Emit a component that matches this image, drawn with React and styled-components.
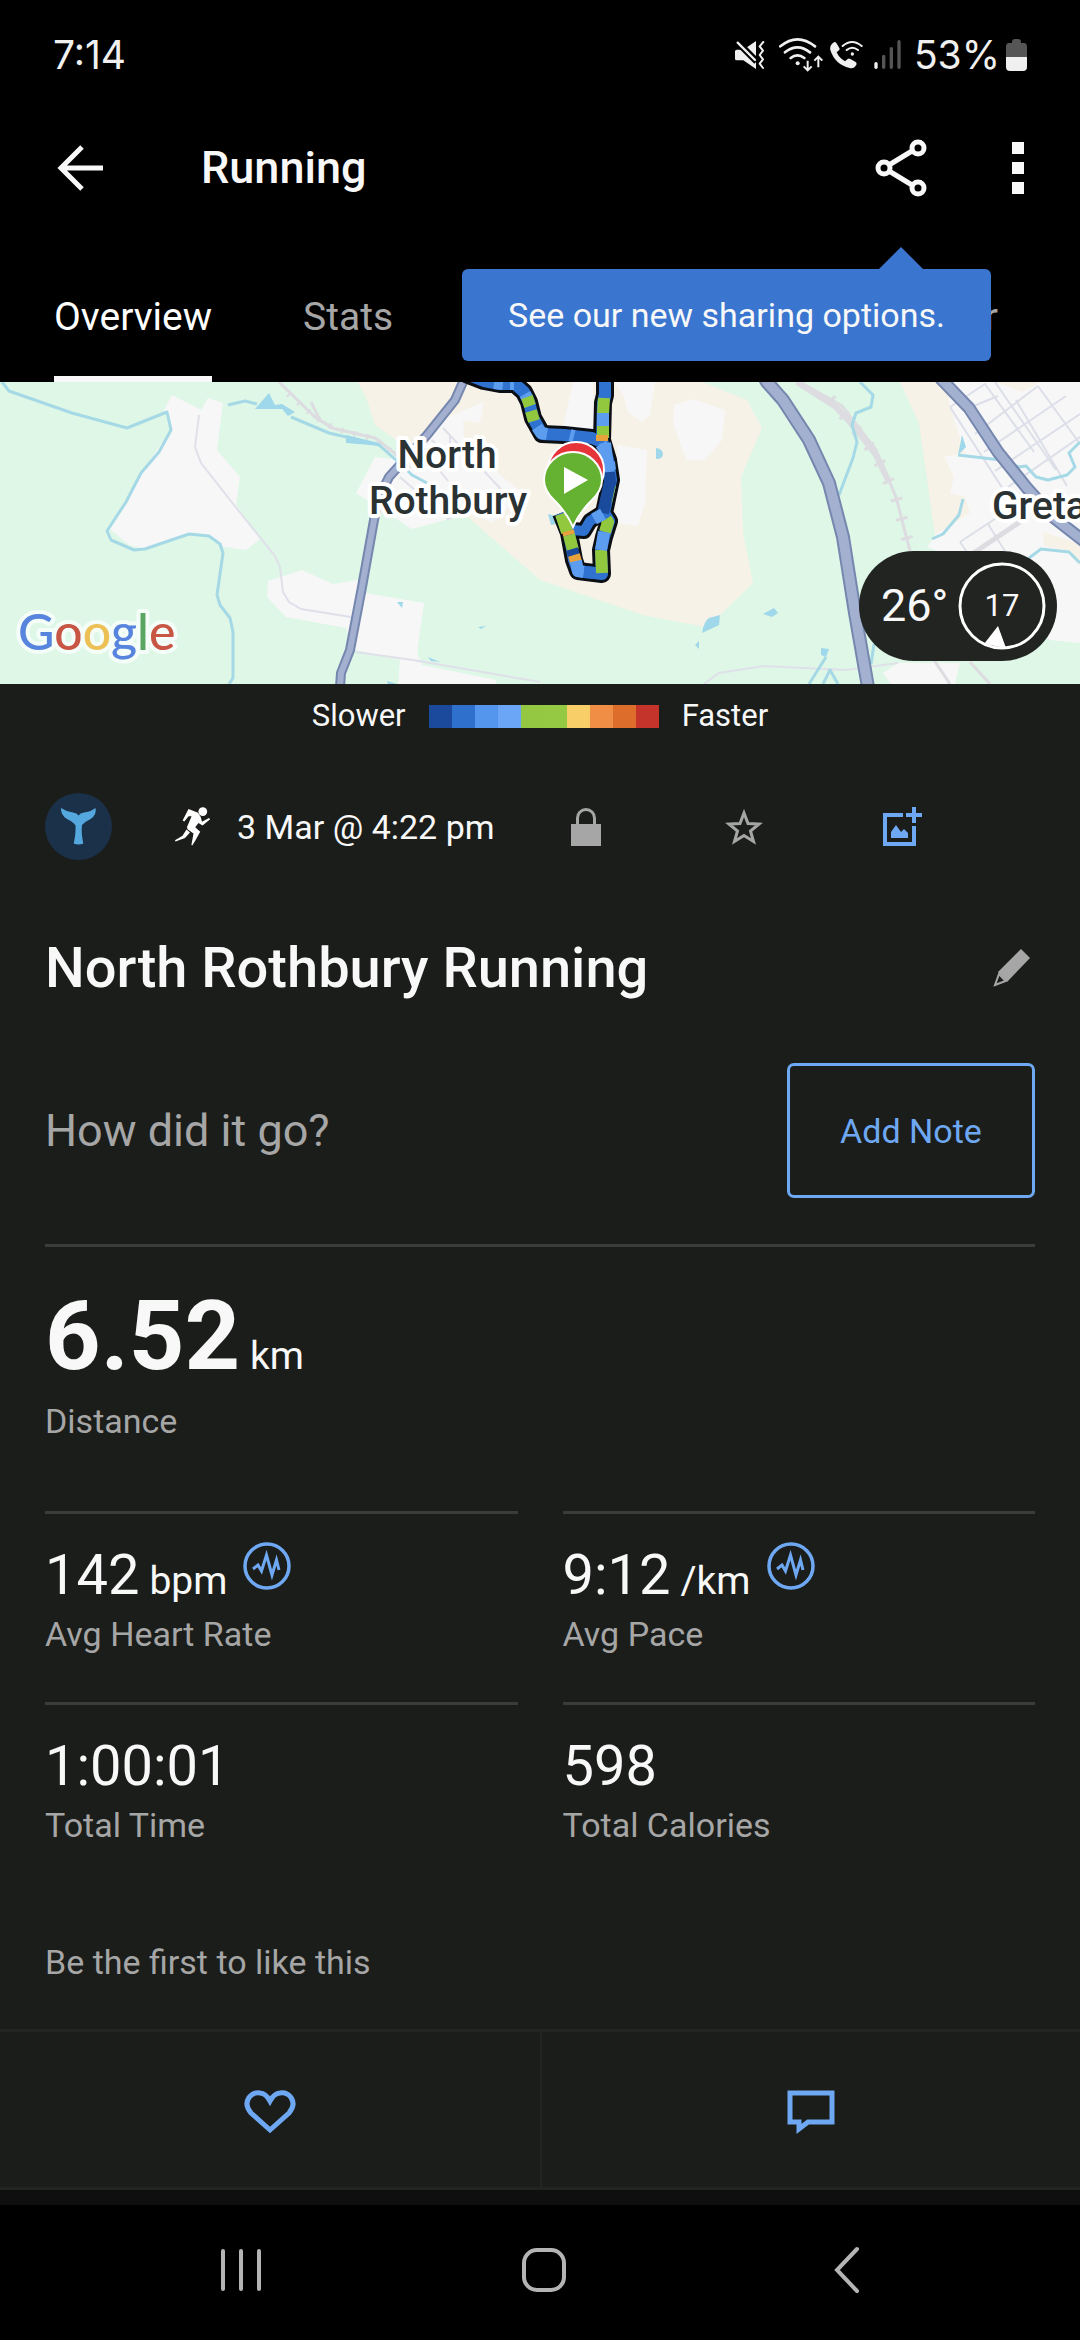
import styled, { createGlobalStyle } from "styled-components";

const colors = {
  background: "#1b1d1a",
  surface: "#222422",
  text: "#f8f8f8",
  muted: "#a6a6a6",
  accent: "#6fa8f2",
  divider: "#3b3b3a",
  tooltip: "#3a76d0",
};

const GlobalStyle = createGlobalStyle`
  * {
    box-sizing: border-box;
  }
  body {
    margin: 0;
    background-color: #000;
    color: ${colors.text};
    font-family: Roboto, "Liberation Sans", sans-serif;
  }
  button {
    padding: 0;
    border: 0;
    background: none;
    color: inherit;
    font: inherit;
    cursor: pointer;
  }
  svg {
    display: block;
  }
  h1, h2, p, dl, dd {
    margin: 0;
    font-weight: 400;
  }
`;

const Screen = styled.div`
  display: flex;
  flex-direction: column;
  min-height: 100vh;
`;

const StatusBar = styled.div`
  display: flex;
  align-items: center;
  justify-content: space-between;
  height: 110px;
  padding: 0 53px;
  font-family: Inter, Roboto, sans-serif;
  font-size: 39px;
  line-height: 46px;
  color: #f0f0f0;
`;
const StatusIcons = styled.div`
  display: flex;
  align-items: center;
  gap: 6px;
`;
const BatteryLevel = styled.span`
  margin-left: 4px;
`;

const AppBar = styled.header`
  display: flex;
  align-items: center;
  height: 116px;
  padding: 0 42px 0 44px;
`;
const IconButton = styled.button`
  display: flex;
  align-items: center;
  justify-content: center;
  width: ${(props) => props.$width || 72}px;
  height: 64px;
`;
const AppTitle = styled.h1`
  flex: 1;
  margin-left: 85px;
  font-size: 45px;
  font-weight: 500;
  line-height: 54px;
`;
const ShareWrap = styled.div`
  position: relative;
  margin-right: 61px;
`;
const Tooltip = styled.div`
  position: absolute;
  top: 133px;
  right: -54px;
  z-index: 2;
  padding: 26px 46px;
  border-radius: 6px;
  background-color: ${colors.tooltip};
  font-size: 34px;
  line-height: 40px;
  white-space: nowrap;
  &::before {
    content: "";
    position: absolute;
    bottom: 100%;
    right: 68px;
    border: 22px solid transparent;
    border-top-width: 0;
    border-bottom-color: ${colors.tooltip};
  }
`;

const Tabs = styled.nav`
  display: flex;
  gap: 91px;
  padding: 0 82px 0 54px;
`;
const Tab = styled.button`
  padding: 68px 0 36px;
  border-bottom: 6px solid ${(props) => (props.$active ? colors.text : "transparent")};
  color: ${(props) => (props.$active ? "#fff" : colors.muted)};
  font-size: 39px;
  line-height: 46px;
  &:last-child {
    margin-left: auto;
  }
`;

const MapPanel = styled.div`
  position: relative;
  height: 302px;
  background-color: #dff7e7;
  > svg {
    width: 100%;
    height: 100%;
  }
`;
const Weather = styled.div`
  position: absolute;
  right: 23px;
  bottom: 23px;
  display: flex;
  align-items: center;
  justify-content: space-between;
  width: 198px;
  height: 110px;
  padding: 0 10px 0 22px;
  border-radius: 55px;
  background-color: ${colors.surface};
  font-size: 45px;
  line-height: 54px;
`;
const Wind = styled.div`
  position: relative;
  display: flex;
  align-items: center;
  justify-content: center;
  width: 90px;
  height: 90px;
  font-size: 31px;
  line-height: 36px;
  svg {
    position: absolute;
    inset: 0;
  }
`;

const Content = styled.main`
  flex: 1;
  background-color: ${colors.background};
`;
const Legend = styled.div`
  display: flex;
  align-items: center;
  justify-content: center;
  gap: 23px;
  height: 64px;
  font-size: 31px;
  line-height: 36px;
`;
const Scale = styled.div`
  display: flex;
`;
const Swatch = styled.span`
  width: 23px;
  height: 23px;
  background-color: ${(props) => props.$color};
`;

const Section = styled.section`
  padding: 0 45px;
`;
const MetaRow = styled.div`
  display: flex;
  align-items: center;
  margin-top: 45px;
`;
const MetaDate = styled.div`
  display: flex;
  flex: 1;
  align-items: center;
  gap: 26px;
  margin-left: 63px;
  font-size: 34px;
  line-height: 40px;
`;
const MetaActions = styled.div`
  display: flex;
  margin-right: 54px;
`;
const TitleRow = styled.div`
  display: flex;
  align-items: center;
  justify-content: space-between;
  height: 66px;
  margin-top: 75px;
`;
const ActivityName = styled.h2`
  font-size: 56px;
  font-weight: 500;
  line-height: 66px;
`;
const NoteRow = styled.div`
  display: flex;
  align-items: center;
  justify-content: space-between;
  margin-top: 62px;
  padding-bottom: 46px;
  border-bottom: 3px solid ${colors.divider};
`;
const Prompt = styled.p`
  color: ${colors.muted};
  font-size: 45px;
  line-height: 54px;
`;
const NoteButton = styled.button`
  width: 248px;
  height: 135px;
  border: 3px solid ${colors.accent};
  border-radius: 7px;
  color: ${colors.accent};
  font-size: 34px;
  line-height: 40px;
`;

const Primary = styled.dl`
  display: flex;
  flex-direction: column-reverse;
  gap: 9px;
  padding: 33px 0 70px;
`;
const Label = styled.dt`
  color: ${colors.muted};
  font-size: 34px;
  line-height: 40px;
`;
const PrimaryValue = styled.dd`
  display: flex;
  align-items: baseline;
  gap: 10px;
  font-size: 97px;
  font-weight: 700;
  line-height: 112px;
`;
const Unit = styled.span`
  font-size: 39px;
  font-weight: 400;
  line-height: 46px;
`;
const StatGrid = styled.div`
  display: grid;
  grid-template-columns: 1fr 1fr;
  column-gap: 45px;
`;
const StatCell = styled.dl`
  display: flex;
  flex-direction: column-reverse;
  gap: 6px;
  padding: 28px 0 48px;
  border-top: 3px solid ${colors.divider};
`;
const Value = styled.dd`
  display: flex;
  align-items: baseline;
  gap: 10px;
  height: 66px;
  font-size: 56px;
  line-height: 66px;
`;
const ZoneButton = styled.button`
  align-self: flex-start;
  margin-left: 6px;
`;
const Likes = styled.p`
  padding: 49px 0 47px;
  color: ${colors.muted};
  font-size: 34px;
  line-height: 40px;
`;

const SocialBar = styled.div`
  display: grid;
  grid-template-columns: 1fr 1fr;
  border: solid ${colors.surface};
  border-width: 3px 0;
`;
const SocialButton = styled.button`
  display: flex;
  align-items: center;
  justify-content: center;
  height: 155px;
  padding-top: 5px;
  & + & {
    border-left: 2px solid ${colors.surface};
  }
`;
const NextCard = styled.div`
  height: 15px;
  background-color: #0f0f0f;
`;
const SystemNav = styled.nav`
  display: grid;
  grid-template-columns: repeat(3, 1fr);
  height: 135px;
  padding: 0 82px 5px 90px;
  background-color: #000;
`;
const NavButton = styled.button`
  display: flex;
  align-items: center;
  justify-content: center;
`;

/* ---- icons ---- */

const MuteIcon = () => (
  <svg width="36" height="36" viewBox="105 111 108 108" fill="#f0f0f0">
    <path d="M116 149h20l38-26v84l-38-26h-20q-5 0-5-5v-22q0-5 5-5z" />
    <path d="M116 124l60 60" stroke="#000" strokeWidth="20" />
    <path d="M119 128l52 52" stroke="#f0f0f0" strokeWidth="7" strokeLinecap="round" />
    <path
      d="M196 126l-11 13 10 13-10 13 10 13-10 13 10 13"
      fill="none"
      stroke="#f0f0f0"
      strokeWidth="6"
      strokeLinecap="round"
      strokeLinejoin="round"
    />
  </svg>
);

const WifiIcon = () => (
  <svg width="49" height="36" viewBox="231 111 147 108" fill="none" stroke="#f0f0f0" strokeWidth="8" strokeLinecap="round">
    <path d="M247 139q51-42 104 0M261 157q37-30 75 0M278 174q20-16 41 0" />
    <circle cx="299" cy="190" r="6" fill="#f0f0f0" stroke="none" />
    <path d="M329 182v27M317 199l12 12 12-12M361 202v-30M349 182l12-12 12 12" strokeWidth="6" strokeLinecap="butt" />
  </svg>
);

const WifiCallIcon = () => (
  <svg width="34" height="36" viewBox="396 111 102 108" fill="none" stroke="#f0f0f0" strokeWidth="6" strokeLinecap="round">
    <path
      d="M408 127q4-3 7 2l9 15q2 4-1 7l-7 6q7 17 25 27l8-7q4-3 8 0l16 9q4 3 2 8-7 13-20 10-44-10-58-54-3-14 11-23z"
      fill="#f0f0f0"
      stroke="none"
    />
    <path d="M434 138q28-24 57 0M446 150q17-14 34 0" />
    <circle cx="463" cy="162" r="5" fill="#f0f0f0" stroke="none" />
  </svg>
);

const SignalIcon = () => (
  <svg width="34" height="36" viewBox="516 111 102 108" strokeWidth="10" strokeLinecap="round">
    <path d="M534 191v11" stroke="#f0f0f0" />
    <path d="M557 169v33M580 146v56M603 125v77" stroke="#555" />
  </svg>
);

const BatteryIcon = () => (
  <svg width="21" height="32" viewBox="0 0 21 32">
    <path d="M6 3q0-3 3-3h3q3 0 3 3v1h3q3 0 3 4v10H0V8q0-4 3-4h3z" fill="#555" />
    <path d="M0 18h21v10q0 4-4 4H4q-4 0-4-4z" fill="#f0f0f0" />
  </svg>
);

const BackArrow = () => (
  <svg width="46" height="46" viewBox="0 0 46 46" fill="none" stroke="#f8f8f8" strokeWidth="5">
    <path d="M25 2L4 23l21 21M4 23h42" />
  </svg>
);

const ShareIcon = () => (
  <svg width="52" height="58" viewBox="0 0 52 58" fill="none" stroke="#f8f8f8" strokeWidth="5">
    <circle cx="43" cy="9" r="6" />
    <circle cx="9" cy="29" r="6" />
    <circle cx="43" cy="49" r="6" />
    <path d="M14 26l23-14M14 32l23 14" />
  </svg>
);

const MoreIcon = () => (
  <svg width="12" height="52" viewBox="0 0 12 52" fill="#f8f8f8">
    <path d="M0 0h12v12H0zM0 20h12v12H0zM0 40h12v12H0z" />
  </svg>
);

const AvatarIcon = () => (
  <svg width="67" height="67" viewBox="0 0 67 67">
    <circle cx="33.500" cy="33.500" r="33.500" fill="#1b3049" />
    <path
      d="M16 15q6 4 12 4.500 4 .5 5.500 3 1.500-2.500 5.500-3 6-.5 11.500-4.500 1.500 7-5 11-6 3-8.500 6-1 8 1.300 18.500-4.800 2-9.600 0Q31 40 30.500 32.500q-2-3.500-8.500-6.500-6.500-4-6-11z"
      fill="#55a8dd"
    />
  </svg>
);

const RunnerIcon = () => (
  <svg width="36" height="39" viewBox="0 0 36 39" fill="#fff">
    <circle cx="27.800" cy="4.600" r="4.400" />
    <path d="M13.500 2L23 5.800l2.600 4 1.400 5L34 11l1.200 1.200-7.700 6.300-4-2.500-3.300 4.300 5 4.500-5 9-3 4.700-.8-.5 2.100-11.500-6-4.200-.5-2.300 4.600-10.700-3 0L9.300 14.500 7.600 13.500z" />
    <path d="M11.500 22.500l3.500 3-5 5.500-9.500 3.500L0 33.300l7.500-4.600z" />
  </svg>
);

const LockIcon = () => (
  <svg width="30" height="39" viewBox="0 0 30 39">
    <path d="M6.500 18V11a8.500 8.500 0 0117 0v7" fill="none" stroke={colors.muted} strokeWidth="3" />
    <path d="M0 17h30v22H0z" fill={colors.muted} />
  </svg>
);

const StarIcon = () => (
  <svg width="38" height="36" viewBox="0 0 38 36" fill="none" stroke={colors.muted} strokeWidth="3">
    <path d="M19 4l4 10.500 11 .5-8.500 7 3 10.500L19 26.500 9.500 32.500l3-10.500L4 15l11-.5z" />
  </svg>
);

const AddPhotoIcon = () => (
  <svg width="39" height="40" viewBox="0 0 39 40" fill={colors.accent}>
    <path d="M20 6v4H4v25h25V19h4v20H0V6zM29 0h4v6h6v4h-6v6h-4v-6h-6V6h6z" />
    <path d="M8 31v-6l5-7 5 7 3-3 4 4v5z" />
  </svg>
);

const PencilIcon = () => (
  <svg width="38" height="38" viewBox="0 0 38 38">
    <path d="M28 0l9 9-23 24L5 23z" fill={colors.muted} />
    <path d="M6 25l6.500 7L2 36z" fill={colors.background} stroke={colors.muted} strokeWidth="2" />
  </svg>
);

const ZoneIcon = () => (
  <svg width="48" height="48" viewBox="0 0 48 48" fill="none" stroke={colors.accent}>
    <circle cx="24" cy="24" r="22" strokeWidth="3.500" />
    <path d="M10 27l5-4 3.500 6L23.500 13l5.500 20 4.500-15 2.500 10" strokeWidth="3" />
  </svg>
);

const HeartIcon = () => (
  <svg width="52" height="45" viewBox="0 0 52 45" fill="none" stroke={colors.accent} strokeWidth="5">
    <path d="M26 40L7 23Q0 15 5 7.500 9 2 16 3q6 .5 10 8 4-7.500 10-8 7-1 11 4.500 5 7.500-2 15.500z" />
  </svg>
);

const CommentIcon = () => (
  <svg width="48" height="45" viewBox="0 0 48 45" fill="none" stroke={colors.accent} strokeWidth="5">
    <path d="M3 3h42v29H21l-9 7v-7H3z" />
  </svg>
);

const RecentsIcon = () => (
  <svg width="42" height="44" viewBox="0 0 42 44" stroke="#b4b4b4" strokeWidth="4" strokeLinecap="round">
    <path d="M3 3v38M21 3v38M39 3v38" />
  </svg>
);

const HomeIcon = () => (
  <svg width="46" height="46" viewBox="0 0 46 46" fill="none" stroke="#b4b4b4" strokeWidth="4">
    <rect x="3" y="3" width="40" height="40" rx="13" />
  </svg>
);

const NavBackIcon = () => (
  <svg width="26" height="48" viewBox="0 0 26 48" fill="none" stroke="#b4b4b4" strokeWidth="4" strokeLinecap="round">
    <path d="M23 3L3 24l20 21" />
  </svg>
);

/* ---- map ---- */

const TRACK_LOOP =
  "M605-4V13L603 21 602 58 608 78 611 98 604 131 609 139 604 155 601 168 602 192 578 189 574 178 569 151 561 131";
const TRACK_WEST = "M466-8L484-1 500 2 515 2 524 10 529 20 533 36 542 52 564 53 592 56 602 60";
const TRACK_LINK = "M604 130L590 139 584 149 573 148";

const trackPieces = [
  ["#2f72cf", "M605-4V13L604 18"],
  ["#92c83e", "M604 16L603 32M603 43V56M610 103L606 120M606 137L608 140 605 150M601 168L602 191"],
  ["#5d9df0", "M603 31V44M605 61L609 92M604 150L601 168"],
  ["#e8a23c", "M602 53V59"],
  ["#1a4a9b", "M609 90L610 100 603 131"],
  ["#92c83e", "M561 132L567 150M569 153L573 168"],
  ["#1a4a9b", "M572 167L574 174"],
  ["#e8a23c", "M574 173L576 180M568 149L569 153"],
  ["#5d9df0", "M576 179L578 189 584 190"],
  ["#2f72cf", "M584 190L595 191"],
  ["#5d9df0", "M494 1L503 2M510 2L514 2M525 12L528 17M537 45L541 51 547 52M570 53L574 54"],
  ["#92c83e", "M527 15L530 24M531 29L534 39"],
  ["#5d9df0", "M603 132L594 137M601 62L606 70M609 80L610 88"],
];

function TrackMap() {
  return (
    <svg viewBox="0 0 1080 302" preserveAspectRatio="xMidYMid slice" role="img" aria-label="Route map">
      <path fill="#dff7e7" d="M0 0h1080v302H0z" />
      <g fill="#f7f2e7">
        <path d="M358 0L367 18 375 43 406 65 468 135 540 198 643 233 705 245 722 231 753 201 743 151 741 95 762 46 747 18 702 0z" />
        <path d="M900 0L919 41 929 111 936 160 980 130 990 0z" />
      </g>
      <g fill="#f7f7f8">
        <path d="M172 13L201 28 208 16 223 21 217 68 240 95 236 123 260 157 246 168 224 165 210 155 189 152 145 167 129 163 109 146 141 91 171 48 164 28z" />
        <path d="M268 199L302 188 333 202 358 198 365 211 424 221 417 271 422 283 496 298V302H398L400 278 355 268 346 246 286 235 267 215z" />
        <path d="M484 20L480 41 463 38 465 65 523 111 492 141 472 131 412 147 356 111 375 75 400 78 424 55 444 36z" />
        <path d="M573 0H593L594 48 563 45zM614 0H655L650 33 642 40 628 30 623 13zM674 23L693 17 725 28 722 58 705 78H686L673 41zM617 63L647 68 645 121 638 144 616 141z" />
        <path d="M946 0L950 25 965 71 944 75 954 95 950 111 965 115 970 131 936 152 927 165 943 171 1050 258 1080 261V0z" />
        <path d="M883 291L898 281H960L955 302H891z" />
      </g>
      <path fill="#f7f2e7" d="M995 0H1040L1022 10zM1043 150L1080 162V184L1066 168 1044 164z" />

      <g fill="none" stroke="#dfe0e9" strokeWidth="2">
        <path d="M199 33L195 65 201 81 238 128 275 174 280 185 283 210 289 220 301 227 351 235M356 270L413 278 540 300" />
        <path d="M443 46L500 106 492 117M432 58L452 80M400 95L448 137 470 128 492 108M420 64L448 99M450 53V72M470 60L484 80" />
        <path d="M704 302L719 291 764 284 846 288 898 281" />
      </g>
      <g fill="none" stroke="#dcdfe8" strokeWidth="2">
        <path d="M950 25L985 2 1034 70M950 25L1003 107M975 52L1038 4M984 70L1066 14M995 89L1080 32M1008 105L1080 55M995 0L1056 88M1016 18L1067 104M1038 4L1080 62M969 26L998 14M960 160L1010 127M960 160L975 182M988 142L1008 174" />
      </g>
      <g fill="none" stroke="#dddce1">
        <path strokeWidth="3" d="M279 0L315 35 332 46 375 56 393 70 410 86M311 20L320 38 335 47" />
        <path strokeWidth="6" strokeDasharray="2 11" d="M288 12L316 36 336 47 375 57 396 73" />
        <path strokeWidth="6" d="M797 0L836 25 855 46 876 73 888 98" />
        <path strokeWidth="3" d="M800 0L842 24 876 68 896 115 910 169M934 278L950 302M970 280L990 302" />
        <path strokeWidth="12" strokeDasharray="3 17" d="M830 17L855 46 876 73 896 115 908 160" />
        <path strokeWidth="5" d="M972 172L1020 140" />
      </g>

      <g fill="none" stroke="#a6d9e6" strokeWidth="3" strokeLinejoin="round">
        <path d="M2 0L9 9 72 31 127 46 167 30 171 48 159 70 141 91 126 120 107 149 111 158 134 168 145 167 189 152 209 154 220 162 223 171 217 213 220 223 230 236 233 250V296L229 302" />
        <path d="M228 23L245 19 257 22M291 35L329 51 346 55 379 63 396 78 412 93 427 101" />
        <path d="M860 0L873 13 871 25 856 31 852 43 857 60 853 76 839 113M958 73L1001 78 1019 85 1026 84 1036 95 1048 98 1067 93 1075 85 1069 71 1080 60" />
        <path d="M963 117L959 133 943 152 932 157M1029 176L1041 167 1069 170 1080 181M826 275L809 302M838 302L830 288 823 302M874 262L871 282" />
      </g>
      <path
        fill="#9fd8ea"
        d="M255 27L269 11 275 23 282 22 295 30 288 34 282 27zM346 53L379 61 382 64 346 61zM656 66Q663 67 663 72 663 77 656 77zM702 251Q704 239 709 236L720 233 719 243zM763 232L774 226 778 231 772 235zM821 266L829 267 826 275 821 273zM695 263L699 259V267zM397 220H403L402 226zM478 245L486 244 481 247zM428 275L440 280 431 279zM387 299L397 302H388zM962 53L966 65 958 73zM548 132L556 134 557 142 551 143z"
      />

      {[
        [9, "M463-3V0L455 18 427 53 389 95 379 115 374 138 362 205 350 268 341 291 340 305"],
        [13, "M764-5L767 0 783 18 809 58 829 101 843 155 855 231 868 305"],
        [12, "M940-4L944 0 969 26 998 70 1027 106 1053 135 1085 160"],
      ].map(([width, d]) => (
        <g key={d} fill="none">
          <path d={d} stroke="#7587ae" strokeWidth={width + 1} />
          <path d={d} stroke="#a3b0d0" strokeWidth={width - 3} />
        </g>
      ))}

      <g fill="none" strokeLinejoin="round">
        <g stroke="#0b0f14" strokeWidth="18">
          <path d={TRACK_WEST} />
          <path d={TRACK_LOOP} />
          <path d={TRACK_LINK} strokeWidth="16" />
        </g>
        <g stroke="#2f72cf" strokeWidth="12">
          <path d={TRACK_WEST} />
          <path d={TRACK_LOOP} />
          <path d={TRACK_LINK} strokeWidth="10" />
        </g>
        {trackPieces.map(([color, d]) => (
          <path key={d} d={d} stroke={color} strokeWidth="12" />
        ))}
      </g>

      <circle cx="576" cy="88" r="28" fill="#e5343a" stroke="#fff" strokeWidth="2" />
      <path
        d="M573 145Q567 131 555 119 544 109 544 98A29 28 0 01602 98Q602 109 591 119 579 131 573 145z"
        fill="#65b132"
        stroke="#fff"
        strokeWidth="2"
      />
      <path d="M564 85L588 98 564 112z" fill="#fff" />

      <g
        fill="#2b3233"
        stroke="#fff"
        strokeWidth="8"
        strokeLinejoin="round"
        paintOrder="stroke"
        fontFamily="Roboto, sans-serif"
        fontSize="39"
        fontWeight="500"
      >
        <text x="447" y="86" textAnchor="middle">North</text>
        <text x="448" y="132" textAnchor="middle">Rothbury</text>
        <text x="992" y="137">Greta</text>
      </g>
      <text
        x="18"
        y="268"
        stroke="#f4fdf8"
        strokeWidth="8"
        strokeLinejoin="round"
        paintOrder="stroke"
        fontFamily="Lato, sans-serif"
        fontSize="50"
        fontWeight="500"
      >
        <tspan fill="#5785de">G</tspan>
        <tspan fill="#c75645">o</tspan>
        <tspan fill="#ecc055">o</tspan>
        <tspan fill="#5785de">g</tspan>
        <tspan fill="#5ba563">l</tspan>
        <tspan fill="#c75645">e</tspan>
      </text>
    </svg>
  );
}

const paceScale = [
  "#1b4a9c",
  "#2f70cc",
  "#5495ee",
  "#6aa5f6",
  "#94c843",
  "#95c843",
  "#f7ce68",
  "#ef8e44",
  "#dd6d2b",
  "#c4342b",
];

const stats = [
  { label: "Avg Heart Rate", value: "142", unit: "bpm", zones: true },
  { label: "Avg Pace", value: "9:12", unit: "/km", zones: true },
  { label: "Total Time", value: "1:00:01" },
  { label: "Total Calories", value: "598" },
];

function Stat({ label, value, unit, zones }) {
  return (
    <StatCell>
      <Label>{label}</Label>
      <Value>
        {value}
        {unit && <Unit>{unit}</Unit>}
        {zones && (
          <ZoneButton aria-label={`${label} chart`}>
            <ZoneIcon />
          </ZoneButton>
        )}
      </Value>
    </StatCell>
  );
}

function App() {
  return (
    <Screen>
      <GlobalStyle />
      <StatusBar>
        <span>7:14</span>
        <StatusIcons>
          <MuteIcon />
          <WifiIcon />
          <WifiCallIcon />
          <SignalIcon />
          <BatteryLevel>53%</BatteryLevel>
          <BatteryIcon />
        </StatusIcons>
      </StatusBar>

      <AppBar>
        <IconButton aria-label="Back">
          <BackArrow />
        </IconButton>
        <AppTitle>Running</AppTitle>
        <ShareWrap>
          <IconButton aria-label="Share">
            <ShareIcon />
          </IconButton>
          <Tooltip role="tooltip">See our new sharing options.</Tooltip>
        </ShareWrap>
        <IconButton $width={40} aria-label="More options">
          <MoreIcon />
        </IconButton>
      </AppBar>

      <Tabs>
        <Tab $active>Overview</Tab>
        <Tab>Stats</Tab>
        <Tab>Gear</Tab>
      </Tabs>

      <MapPanel>
        <TrackMap />
        <Weather>
          <span>26°</span>
          <Wind>
            <svg viewBox="0 0 90 90" fill="none">
              <circle cx="45" cy="45" r="42" stroke="#fff" strokeWidth="3" />
              <path d="M41 65L27 83 49 87z" fill="#fff" />
            </svg>
            <span>17</span>
          </Wind>
        </Weather>
      </MapPanel>

      <Content>
        <Legend>
          <span>Slower</span>
          <Scale>
            {paceScale.map((color) => (
              <Swatch key={color} $color={color} />
            ))}
          </Scale>
          <span>Faster</span>
        </Legend>

        <Section>
          <MetaRow>
            <AvatarIcon />
            <MetaDate>
              <RunnerIcon />
              <span>3 Mar @ 4:22 pm</span>
            </MetaDate>
            <MetaActions>
              <IconButton $width={158} aria-label="Privacy">
                <LockIcon />
              </IconButton>
              <IconButton $width={158} aria-label="Favourite">
                <StarIcon />
              </IconButton>
              <IconButton $width={158} aria-label="Add photo">
                <AddPhotoIcon />
              </IconButton>
            </MetaActions>
          </MetaRow>

          <TitleRow>
            <ActivityName>North Rothbury Running</ActivityName>
            <IconButton $width={46} aria-label="Edit name">
              <PencilIcon />
            </IconButton>
          </TitleRow>

          <NoteRow>
            <Prompt>How did it go?</Prompt>
            <NoteButton>Add Note</NoteButton>
          </NoteRow>

          <Primary>
            <Label>Distance</Label>
            <PrimaryValue>
              6.52
              <Unit>km</Unit>
            </PrimaryValue>
          </Primary>

          <StatGrid>
            {stats.map((stat) => (
              <Stat key={stat.label} {...stat} />
            ))}
          </StatGrid>

          <Likes>Be the first to like this</Likes>
        </Section>

        <SocialBar>
          <SocialButton aria-label="Like">
            <HeartIcon />
          </SocialButton>
          <SocialButton aria-label="Comment">
            <CommentIcon />
          </SocialButton>
        </SocialBar>
        <NextCard />
      </Content>

      <SystemNav>
        <NavButton aria-label="Recent apps">
          <RecentsIcon />
        </NavButton>
        <NavButton aria-label="Home">
          <HomeIcon />
        </NavButton>
        <NavButton aria-label="Back">
          <NavBackIcon />
        </NavButton>
      </SystemNav>
    </Screen>
  );
}

export default App;
